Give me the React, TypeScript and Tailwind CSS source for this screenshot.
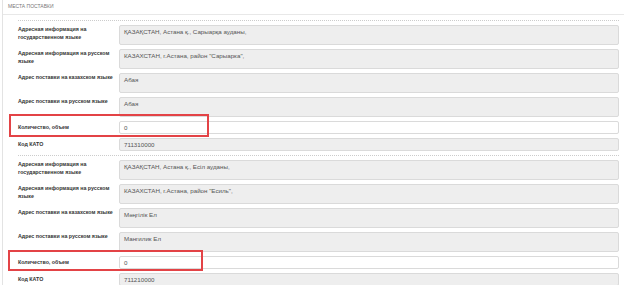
type Field = {
  label: string;
  value: string;
  kind: 'area' | 'input' | 'short';
};

type Mark = { top: string; left: string; w: string; h: string };

const groups: { fields: Field[]; mark: Mark }[] = [
  {
    fields: [
      { label: 'Адресная информация на государственном языке', value: 'ҚАЗАҚСТАН, Астана қ., Сарыарқа ауданы,', kind: 'area' },
      { label: 'Адресная информация на русском языке', value: 'КАЗАХСТАН, г.Астана, район "Сарыарка",', kind: 'area' },
      { label: 'Адрес поставки на казахском языке', value: 'Абая', kind: 'area' },
      { label: 'Адрес поставки на русском языке', value: 'Абая', kind: 'area' },
      { label: 'Количество, объем', value: '0', kind: 'input' },
      { label: 'Код КАТО', value: '711310000', kind: 'short' },
    ],
    mark: { top: 'top-[-7px]', left: 'left-[-9px]', w: 'w-[200px]', h: 'h-[23px]' },
  },
  {
    fields: [
      { label: 'Адресная информация на государственном языке', value: 'ҚАЗАҚСТАН, Астана қ., Есіл ауданы,', kind: 'area' },
      { label: 'Адресная информация на русском языке', value: 'КАЗАХСТАН, г.Астана, район "Есиль",', kind: 'area' },
      { label: 'Адрес поставки на казахском языке', value: 'Мәңгілік Ел', kind: 'area' },
      { label: 'Адрес поставки на русском языке', value: 'Мангилик Ел', kind: 'area' },
      { label: 'Количество, объем', value: '0', kind: 'input' },
      { label: 'Код КАТО', value: '711210000', kind: 'short' },
    ],
    mark: { top: 'top-[-6px]', left: 'left-[-10px]', w: 'w-[195px]', h: 'h-[21px]' },
  },
];

const Row = ({ field, mark }: { field: Field; mark?: Mark }) => {
  if (field.kind === 'area') {
    return (
      <div className="flex h-[20px]">
        <div className="w-[101px] shrink-0 pr-[2px] text-[5.3px] leading-[8px] font-bold text-[#333]">{field.label}</div>
        <div className="flex-1 rounded-[2px] border border-[#dadada] bg-[#eeeeee] px-[4px] pt-[2px] text-[6.2px] leading-[8px] text-[#555]">
          {field.value}
        </div>
      </div>
    );
  }
  return (
    <div className="relative flex h-[13px]">
      <div className="w-[101px] shrink-0 flex items-center text-[5.3px] font-bold text-[#333]">{field.label}</div>
      <div
        className={
          field.kind === 'input'
            ? 'flex-1 flex items-center rounded-[2px] border border-[#dadada] bg-white px-[4px] text-[6.2px] text-[#555]'
            : 'flex-1 flex items-center rounded-[2px] border border-[#dadada] bg-[#eeeeee] px-[4px] text-[6.2px] text-[#555]'
        }
      >
        {field.value}
      </div>
      {mark && (
        <div className={`absolute ${mark.top} ${mark.left} ${mark.w} ${mark.h} border-2 border-[#e34346] pointer-events-none`} />
      )}
    </div>
  );
};

export default function App() {
  return (
    <div className="w-[624px] h-[285px] overflow-hidden bg-white font-['Liberation_Sans',Arial,sans-serif]">
      <div className="ml-[2px] h-full border-l border-[#e3e3e3]">
        <div className="flex h-[15px] items-center border-b border-[#e8e8e8] pl-[5px] text-[5px] uppercase text-[#777]">
          Места поставки
        </div>
        <div className="pl-[15px] pr-[5px] pt-[5px]">
          {groups.map((g, gi) => (
            <div key={gi} className="flex flex-col gap-[4px] border-t border-dotted border-[#cccccc] pt-[4px] pb-[4px]">
              {g.fields.map((f, fi) => (
                <Row key={fi} field={f} mark={f.kind === 'input' ? g.mark : undefined} />
              ))}
            </div>
          ))}
        </div>
      </div>
    </div>
  );
}
